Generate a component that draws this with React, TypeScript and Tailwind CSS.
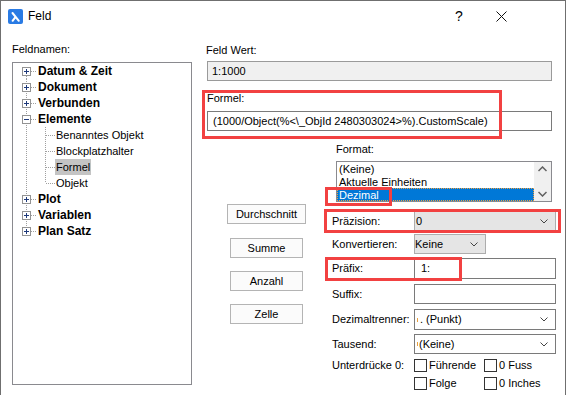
import React from "react"

const font = { fontFamily: '"Liberation Sans", Arial, sans-serif' }

type RowKind = "first" | "mid" | "open" | "child" | "lastChild" | "last"

function Connector({ kind, expanded }: { kind: RowKind; expanded?: boolean }) {
    const isChild = kind === "child" || kind === "lastChild"
    return (
        <svg width={isChild ? 43 : 25} height={16} className="shrink-0" shapeRendering="crispEdges">
            <g stroke="#a0a0a0" strokeDasharray="1 1" fill="none">
                {kind === "first" && <line x1={13.5} y1={9} x2={13.5} y2={16} />}
                {(kind === "mid" || kind === "open" || isChild) && <line x1={13.5} y1={0} x2={13.5} y2={16} />}
                {kind === "last" && <line x1={13.5} y1={0} x2={13.5} y2={8} />}
                {!isChild && <line x1={18} y1={8.5} x2={24} y2={8.5} />}
                {kind === "open" && <line x1={32.5} y1={15} x2={32.5} y2={16} />}
                {kind === "child" && <line x1={32.5} y1={0} x2={32.5} y2={16} />}
                {kind === "lastChild" && <line x1={32.5} y1={0} x2={32.5} y2={8} />}
                {isChild && <line x1={33} y1={8.5} x2={42} y2={8.5} />}
            </g>
            {!isChild && (
                <g>
                    <rect x={9.5} y={4.5} width={8} height={8} fill="#fff" stroke="#939393" />
                    <line x1={11} y1={8.5} x2={16} y2={8.5} stroke="#1f3a7a" />
                    {!expanded && <line x1={13.5} y1={6} x2={13.5} y2={11} stroke="#1f3a7a" />}
                </g>
            )}
        </svg>
    )
}

function TreeRow({ label, kind, expanded, selected }: { label: string; kind: RowKind; expanded?: boolean; selected?: boolean }) {
    const isChild = kind === "child" || kind === "lastChild"
    return (
        <div className="flex h-[16px] items-center">
            <Connector kind={kind} expanded={expanded} />
            <span
                className={
                    isChild
                        ? selected
                            ? "ml-[-1px] px-[1px] bg-[#c4c4c4] text-[11px] leading-[16px] text-black"
                            : "text-[11px] leading-[16px] text-black"
                        : "text-[12px] font-bold leading-[16px] text-black"
                }
            >
                {label}
            </span>
        </div>
    )
}

function Chevron() {
    return (
        <svg width="8" height="5" viewBox="0 0 8 5" className="shrink-0">
            <polyline points="0.5,0.5 4,4 7.5,0.5" fill="none" stroke="#444" strokeWidth="1" />
        </svg>
    )
}

function Btn({ label, wide }: { label: string; wide?: boolean }) {
    return (
        <div
            className={
                wide
                    ? "flex h-[20px] w-[79px] items-center justify-center border border-[#b4b4b4] bg-[#fbfbfb] text-[11px]"
                    : "ml-[3px] flex h-[20px] w-[73px] items-center justify-center border border-[#b4b4b4] bg-[#fbfbfb] text-[11px]"
            }
        >
            {label}
        </div>
    )
}

function Check({ label }: { label: string }) {
    return (
        <div className="flex h-[13px] items-center gap-[2px]">
            <div className="h-[13px] w-[13px] border border-[#333] bg-white" />
            <span className="text-[11px] leading-[13px]">{label}</span>
        </div>
    )
}

export default function App() {
    return (
        <div className="relative box-border h-[395px] w-[566px] overflow-hidden border-l border-r border-t border-[#6f6f6f] bg-white text-black" style={font}>
            {/* title bar */}
            <div className="flex h-[30px] items-center pl-[7px]">
                <svg width="15" height="15" viewBox="0 0 15 15">
                    <rect width="15" height="15" rx="2" fill="#2a7be4" />
                    <path d="M4.5 4 L10.8 11.8 M7.6 7.8 L4.6 11.8" stroke="#fff" strokeWidth="2" fill="none" strokeLinecap="round" />
                </svg>
                <span className="ml-[5px] text-[12px]">Feld</span>
                <div className="ml-auto mr-[43px] flex">
                    <div className="flex w-[42px] justify-center text-[14px]">?</div>
                    <div className="flex w-[42px] items-center justify-center">
                        <svg width="11" height="11" viewBox="0 0 11 11">
                            <path d="M0.5 0.5 L10.5 10.5 M10.5 0.5 L0.5 10.5" stroke="#111" strokeWidth="1" />
                        </svg>
                    </div>
                </div>
            </div>

            <div className="flex">
                {/* left column */}
                <div className="ml-[11px] w-[180px]">
                    <div className="mt-[10px] text-[11px] leading-[16px]">Feldnamen:</div>
                    <div className="mt-[5px] h-[323px] border border-[#8a8a8f] bg-white">
                        <TreeRow label="Datum & Zeit" kind="first" />
                        <TreeRow label="Dokument" kind="mid" />
                        <TreeRow label="Verbunden" kind="mid" />
                        <TreeRow label="Elemente" kind="open" expanded />
                        <TreeRow label="Benanntes Objekt" kind="child" />
                        <TreeRow label="Blockplatzhalter" kind="child" />
                        <TreeRow label="Formel" kind="child" selected />
                        <TreeRow label="Objekt" kind="lastChild" />
                        <TreeRow label="Plot" kind="mid" />
                        <TreeRow label="Variablen" kind="mid" />
                        <TreeRow label="Plan Satz" kind="last" />
                    </div>
                </div>

                {/* right column */}
                <div className="ml-[15px] w-[349px]">
                    <div className="mt-[11px] ml-[-1px] text-[11px] leading-[16px]">Feld Wert:</div>
                    <div className="mt-[3px] flex h-[20px] w-[345px] items-center border border-[#9a9a9a] bg-[#f0f0f0] pl-[4px] text-[11px]">1:1000</div>
                    <div className="mt-[9px] text-[11px] leading-[16px]">Formel:</div>
                    <div className="mt-[5px] flex h-[20px] w-[345px] items-center border border-[#7a7a7a] bg-white pl-[5px] text-[11px]">
                        (1000/Object(%&lt;\_ObjId 2480303024&gt;%).CustomScale)
                    </div>

                    <div className="flex">
                        {/* buttons */}
                        <div className="ml-[20px] w-[79px]">
                            <div className="mt-[73px]">
                                <Btn label="Durchschnitt" wide />
                            </div>
                            <div className="mt-[14px]">
                                <Btn label="Summe" />
                            </div>
                            <div className="mt-[13px]">
                                <Btn label="Anzahl" />
                            </div>
                            <div className="mt-[13px]">
                                <Btn label="Zelle" />
                            </div>
                        </div>

                        {/* format form */}
                        <div className="ml-[26px] w-[224px] text-[11px]">
                            <div className="ml-[4px] mt-[10px] leading-[16px]">Format:</div>
                            <div className="ml-[4px] mt-[4px] flex h-[41px] w-[216px] border border-[#8a8a8f] bg-white">
                                <div className="flex-1 overflow-hidden leading-[13px]">
                                    <div className="h-[13px] pl-[2px] pt-[1px]">(Keine)</div>
                                    <div className="h-[13px] pl-[2px] pt-[1px]">Aktuelle Einheiten</div>
                                    <div className="h-[13px] border border-dotted border-[#f0a040] bg-[#0078d7] pl-[1px] text-white">Dezimal</div>
                                </div>
                                <div className="flex w-[17px] flex-col items-center justify-between bg-[#f0f0f0] py-[4px]">
                                    <svg width="9" height="6" viewBox="0 0 9 6">
                                        <polyline points="0.5,5 4.5,1 8.5,5" fill="none" stroke="#606060" strokeWidth="1.5" />
                                    </svg>
                                    <svg width="9" height="6" viewBox="0 0 9 6">
                                        <polyline points="0.5,1 4.5,5 8.5,1" fill="none" stroke="#606060" strokeWidth="1.5" />
                                    </svg>
                                </div>
                            </div>

                            <div className="mt-[9px] flex h-[20px] items-center">
                                <span className="w-[82px]">Präzision:</span>
                                <div className="flex h-[20px] w-[142px] items-center border border-[#adadad] bg-[#e5e5e5] pl-[1px] pr-[7px]">
                                    <span className="flex-1">0</span>
                                    <Chevron />
                                </div>
                            </div>

                            <div className="mt-[3px] flex h-[20px] items-center">
                                <span className="w-[82px]">Konvertieren:</span>
                                <div className="flex h-[20px] w-[72px] items-center border border-[#adadad] bg-[#e5e5e5] pr-[7px]">
                                    <span className="flex-1">Keine</span>
                                    <Chevron />
                                </div>
                            </div>

                            <div className="mt-[4px] flex h-[21px] items-center">
                                <span className="w-[82px]">Präfix:</span>
                                <div className="flex h-[21px] w-[142px] items-center border border-[#7a7a7a] bg-white pl-[6px]">1:</div>
                            </div>

                            <div className="mt-[5px] flex h-[20px] items-center">
                                <span className="w-[82px]">Suffix:</span>
                                <div className="h-[20px] w-[142px] border border-[#7a7a7a] bg-white" />
                            </div>

                            <div className="mt-[5px] flex h-[21px] items-center">
                                <span className="w-[82px]">Dezimaltrenner:</span>
                                <div className="flex h-[21px] w-[142px] items-center border border-[#7a7a7a] bg-white pl-[2px] pr-[7px]">
                                    <span className="mr-[2px] h-[4px] w-[1px] bg-[#e8a040]" />
                                    <span className="flex-1">. (Punkt)</span>
                                    <Chevron />
                                </div>
                            </div>

                            <div className="mt-[4px] flex h-[20px] items-center">
                                <span className="w-[82px]">Tausend:</span>
                                <div className="flex h-[20px] w-[142px] items-center border border-[#7a7a7a] bg-white pl-[2px] pr-[7px]">
                                    <span className="mr-[1px] h-[4px] w-[1px] bg-[#e8a040]" />
                                    <span className="flex-1">(Keine)</span>
                                    <Chevron />
                                </div>
                            </div>

                            <div className="mt-[5px] flex">
                                <span className="w-[82px] leading-[13px]">Unterdrücke 0:</span>
                                <div className="flex flex-col gap-[5px]">
                                    <div className="flex">
                                        <div className="w-[70px]">
                                            <Check label="Führende" />
                                        </div>
                                        <Check label="0 Fuss" />
                                    </div>
                                    <div className="flex">
                                        <div className="w-[70px]">
                                            <Check label="Folge" />
                                        </div>
                                        <Check label="0 Inches" />
                                    </div>
                                </div>
                            </div>
                        </div>
                    </div>
                </div>
            </div>

            {/* red annotation frames */}
            <div className="pointer-events-none absolute left-[201px] top-[89px] h-[49px] w-[300px] border-[3px] border-[#f24141]" />
            <div className="pointer-events-none absolute left-[324px] top-[186px] h-[19px] w-[67px] border-[3px] border-[#f24141]" />
            <div className="pointer-events-none absolute left-[323px] top-[208px] h-[24px] w-[237px] border-[3px] border-[#f24141]" />
            <div className="pointer-events-none absolute left-[324px] top-[256px] h-[24px] w-[137px] border-[3px] border-[#f24141]" />
        </div>
    )
}
